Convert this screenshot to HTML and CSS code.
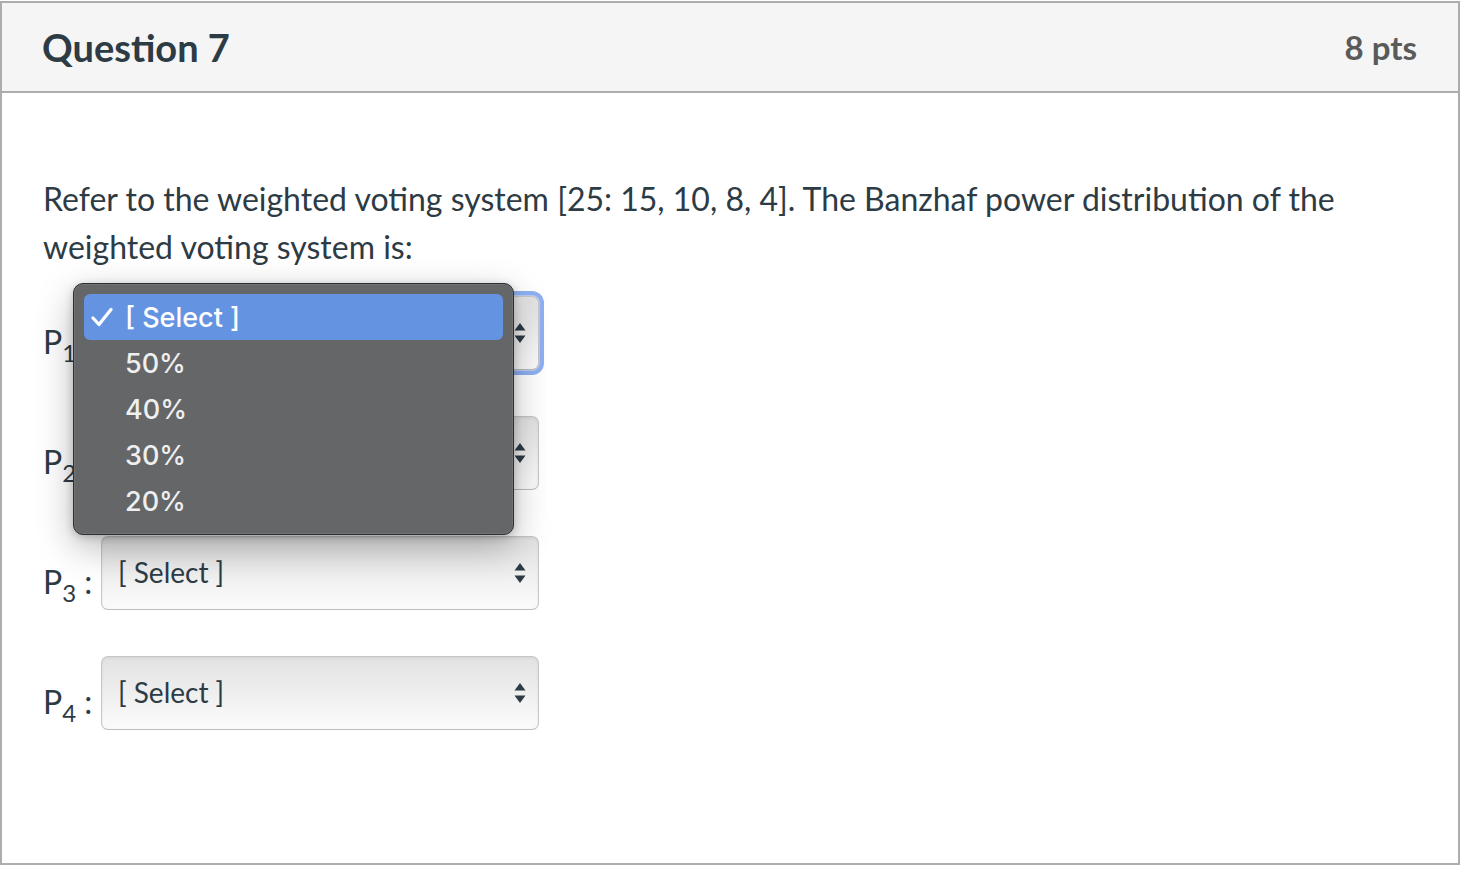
FILE: index.html
```html
<!DOCTYPE html>
<html lang="en">
<head>
<meta charset="utf-8">
<title>Question 7</title>
<link rel="stylesheet" href="styles.css">
</head>
<body>
<div class="question">
  <div class="header">
    <span class="title">Question 7</span>
    <span class="pts">8 pts</span>
  </div>
  <div class="body">
    <p class="text">Refer to the weighted voting system [25: 15, 10, 8, 4]. The Banzhaf power distribution of the weighted voting system is:</p>
    <div class="rows">
      <div class="row">
        <span class="label">P<sub>1</sub> :</span>
        <div class="select focused">
          <span class="value">[ Select ]</span>
          <svg class="arrows" width="12" height="22" viewBox="0 0 12 22"><path d="M6 1 L11.5 8.5 L0.5 8.5 Z M6 21 L11.5 13.5 L0.5 13.5 Z" fill="#2d3b45"/></svg>
        </div>
        <div class="menu">
          <div class="item selected">
            <svg class="check" width="22" height="20" viewBox="0 0 22 20"><path d="M2 11 L8 17.5 L20 2.5" fill="none" stroke="#ffffff" stroke-width="3.2" stroke-linecap="round" stroke-linejoin="round"/></svg>
            [ Select ]
          </div>
          <div class="item">50%</div>
          <div class="item">40%</div>
          <div class="item">30%</div>
          <div class="item">20%</div>
        </div>
      </div>
      <div class="row">
        <span class="label">P<sub>2</sub> :</span>
        <div class="select">
          <span class="value">[ Select ]</span>
          <svg class="arrows" width="12" height="22" viewBox="0 0 12 22"><path d="M6 1 L11.5 8.5 L0.5 8.5 Z M6 21 L11.5 13.5 L0.5 13.5 Z" fill="#2d3b45"/></svg>
        </div>
      </div>
      <div class="row">
        <span class="label">P<sub>3</sub> :</span>
        <div class="select">
          <span class="value">[ Select ]</span>
          <svg class="arrows" width="12" height="22" viewBox="0 0 12 22"><path d="M6 1 L11.5 8.5 L0.5 8.5 Z M6 21 L11.5 13.5 L0.5 13.5 Z" fill="#2d3b45"/></svg>
        </div>
      </div>
      <div class="row">
        <span class="label">P<sub>4</sub> :</span>
        <div class="select">
          <span class="value">[ Select ]</span>
          <svg class="arrows" width="12" height="22" viewBox="0 0 12 22"><path d="M6 1 L11.5 8.5 L0.5 8.5 Z M6 21 L11.5 13.5 L0.5 13.5 Z" fill="#2d3b45"/></svg>
        </div>
      </div>
    </div>
  </div>
</div>
</body>
</html>
```
FILE: styles.css
```css
html, body {
  margin: 0;
  padding: 0;
  background: #ffffff;
}

body {
  font-family: Lato, "Noto Sans", sans-serif;
  color: #2d3b45;
}

.question {
  box-sizing: border-box;
  width: 1460px;
  height: 864px;
  margin-top: 1px;
  border: 2px solid #adadad;
  display: flex;
  flex-direction: column;
}

.header {
  box-sizing: border-box;
  height: 90px;
  background: #f5f5f5;
  border-bottom: 2px solid #adadad;
  display: flex;
  align-items: center;
  justify-content: space-between;
  padding: 0 41px;
}

.title {
  font-size: 38px;
  font-weight: 700;
  color: #2d3b45;
  margin-left: -1px;
}

.pts {
  font-size: 33px;
  font-weight: 700;
  color: #5a5a5a;
}

.body {
  padding: 82px 41px 0 41px;
}

.text {
  margin: 0 0 25px 0;
  font-size: 32px;
  line-height: 48px;
}

.rows {
  display: flex;
  flex-direction: column;
  gap: 46px;
}

.row {
  position: relative;
  display: flex;
  align-items: flex-start;
  height: 74px;
}

.label {
  width: 58px;
  margin-top: 22px;
  font-size: 32px;
  line-height: 48px;
  white-space: nowrap;
}

.label sub {
  font-size: 24px;
  line-height: 0;
  vertical-align: -8px;
}

.select {
  box-sizing: border-box;
  width: 438px;
  height: 74px;
  border: 1px solid #c6c6c6;
  border-bottom-color: #bdbdbd;
  border-radius: 7px;
  background: linear-gradient(#e2e2e2 0%, #ececec 40%, #f7f7f7 80%, #fbfbfb 100%);
  box-shadow: inset 0 1px 3px rgba(0, 0, 0, 0.07);
  display: flex;
  align-items: center;
  justify-content: space-between;
  padding: 0 12px 0 16px;
}

.select.focused {
  box-shadow: 0 0 0 1px #b7cdf6, 0 0 0 5px #8eb0f2;
}

.value {
  font-size: 28px;
  line-height: 1;
  margin-top: -2px;
  color: #2d3b45;
}

.arrows {
  display: block;
}

.menu {
  position: absolute;
  left: 30px;
  top: -13px;
  box-sizing: border-box;
  width: 441px;
  height: 252px;
  padding: 10px;
  background: #646668;
  border: 1px solid #2e2f31;
  border-radius: 10px;
  box-shadow: 0 0 0 1px rgba(255, 255, 255, 0.08) inset, 0 12px 36px rgba(0, 0, 0, 0.28), 0 2px 8px rgba(0, 0, 0, 0.2);
  font-family: Inter, "Noto Sans", sans-serif;
  z-index: 5;
}

.item {
  position: relative;
  height: 46px;
  line-height: 48px;
  padding-left: 41px;
  font-size: 27px;
  font-weight: 500;
  color: #efefef;
  border-radius: 6px;
}

.item.selected {
  background: #6494e1;
  color: #ffffff;
}

.check {
  position: absolute;
  left: 7px;
  top: 13px;
}
```
